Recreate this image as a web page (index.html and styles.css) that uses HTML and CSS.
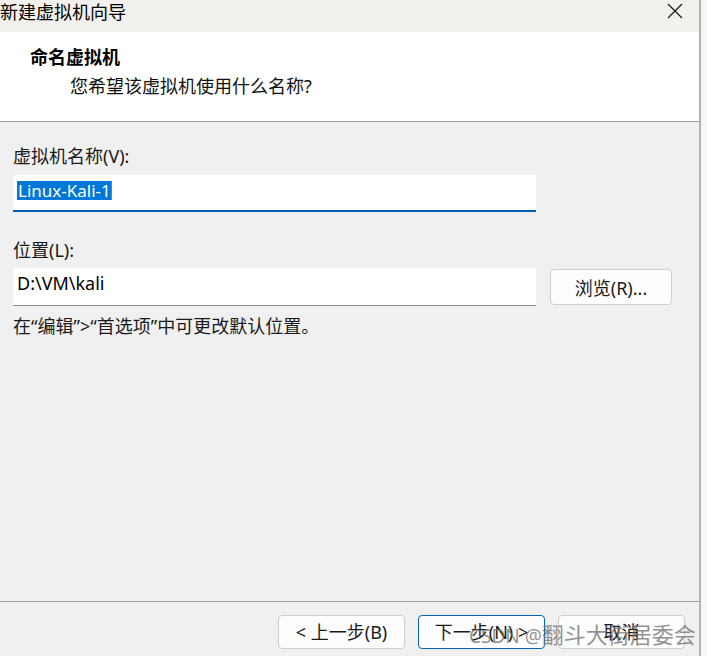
FILE: index.html
```html
<!DOCTYPE html>
<html lang="zh-CN">
<head>
<meta charset="utf-8">
<title>新建虚拟机向导</title>
<link rel="stylesheet" href="styles.css">
</head>
<body>
<div class="screen">
  <div class="window">
    <div class="titlebar">
      <span class="title">新建虚拟机向导</span>
      <svg class="close" width="16" height="16" viewBox="0 0 16 16"><path d="M1 1 L15 15 M15 1 L1 15" stroke="#1a1a1a" stroke-width="1.3" fill="none"/></svg>
    </div>
    <div class="header">
      <div class="h-title">命名虚拟机</div>
      <div class="h-sub">您希望该虚拟机使用什么名称?</div>
    </div>
    <div class="content">
      <div class="label first">虚拟机名称(V):</div>
      <div class="input active"><span class="sel">Linux-Kali-1</span><span class="caret"></span></div>
      <div class="label second">位置(L):</div>
      <div class="row">
        <div class="input path">D:\VM\kali</div>
        <div class="btn browse">浏览(R)...</div>
      </div>
      <div class="hint">在“编辑”&gt;“首选项”中可更改默认位置。</div>
    </div>
    <div class="footer">
      <div class="btn nav">&lt; 上一步(B)</div>
      <div class="btn nav primary">下一步(N) &gt;</div>
      <div class="btn nav">取消</div>
    </div>
  </div>
  <div class="edge"></div>
  <div class="watermark"><span class="wm-latin">CSDN @</span><span class="wm-cjk">翻斗大街居委会</span></div>
</div>
</body>
</html>
```
FILE: styles.css
```css
* { box-sizing: border-box; }
html, body { margin: 0; padding: 0; }
body {
  width: 707px;
  height: 656px;
  overflow: hidden;
  font-family: "Noto Sans", "Noto Sans CJK SC", sans-serif;
  color: #1a1a1a;
}
.screen {
  position: relative;
  display: flex;
  width: 707px;
  height: 656px;
}
.window {
  width: 701px;
  height: 656px;
  display: flex;
  flex-direction: column;
  background: #f0f0f0;
  border-right: 2px solid #b2b2b2;
}
.edge {
  flex: 1;
  background: #f6f6f6;
}
.titlebar {
  height: 32px;
  background: #f3f1ee;
  display: flex;
  align-items: flex-start;
  justify-content: space-between;
  flex-shrink: 0;
}
.title {
  font-size: 18px;
  line-height: 24px;
  color: #000;
}
.close {
  margin: 3px 16px 0 0;
}
.header {
  height: 90px;
  background: #fff;
  border-bottom: 1px solid #a0a0a0;
  padding: 13px 0 0 30px;
  flex-shrink: 0;
}
.h-title {
  font-size: 18px;
  line-height: 24px;
  font-weight: 700;
  color: #000;
}
.h-sub {
  font-size: 18px;
  line-height: 24px;
  margin: 5px 0 0 40px;
  color: #111;
}
.content {
  flex: 1;
  padding: 0 0 0 13px;
}
.label {
  font-size: 18px;
  line-height: 24px;
}
.label.first { margin-top: 22px; }
.label.second { margin-top: 26px; }
.input {
  width: 523px;
  background: #fff;
  font-size: 18px;
  color: #000;
}
.input.active {
  height: 37px;
  margin-top: 7px;
  border-bottom: 2px solid #005fb8;
  padding: 6px 0 0 4px;
  display: flex;
  align-items: flex-start;
  font-size: 17px;
}
.sel {
  background: #0078d7;
  color: #fff;
  line-height: 19px;
  height: 19px;
  padding: 0 0 0 1px;
}
.caret {
  width: 1px;
  height: 19px;
  background: #d2691e;
}
.row {
  display: flex;
  align-items: flex-start;
  margin-top: 6px;
}
.input.path {
  height: 38px;
  border-bottom: 1px solid #8a8a8a;
  padding: 3px 0 0 4px;
  line-height: 24px;
}
.btn {
  display: flex;
  align-items: center;
  justify-content: center;
  background: #fdfdfd;
  border: 1px solid #d0d0d0;
  border-radius: 4px;
  font-size: 18px;
  color: #1a1a1a;
}
.browse {
  width: 122px;
  height: 36px;
  margin: 1px 0 0 14px;
}
.hint {
  margin-top: 8px;
  font-size: 18px;
  line-height: 24px;
}
.footer {
  height: 55px;
  border-top: 1px solid #a0a0a0;
  display: flex;
  justify-content: flex-end;
  gap: 13px;
  padding: 13px 14px 0 0;
  flex-shrink: 0;
}
.nav {
  width: 127px;
  height: 34px;
  padding-bottom: 2px;
}
.primary {
  border-color: #0067c0;
}
.watermark {
  position: absolute;
  left: 469px;
  top: 619px;
  line-height: 30px;
  color: rgba(110, 110, 110, 0.75);
  white-space: nowrap;
}
.wm-latin {
  font-size: 19px;
}
.wm-cjk {
  font-size: 22px;
}
```
